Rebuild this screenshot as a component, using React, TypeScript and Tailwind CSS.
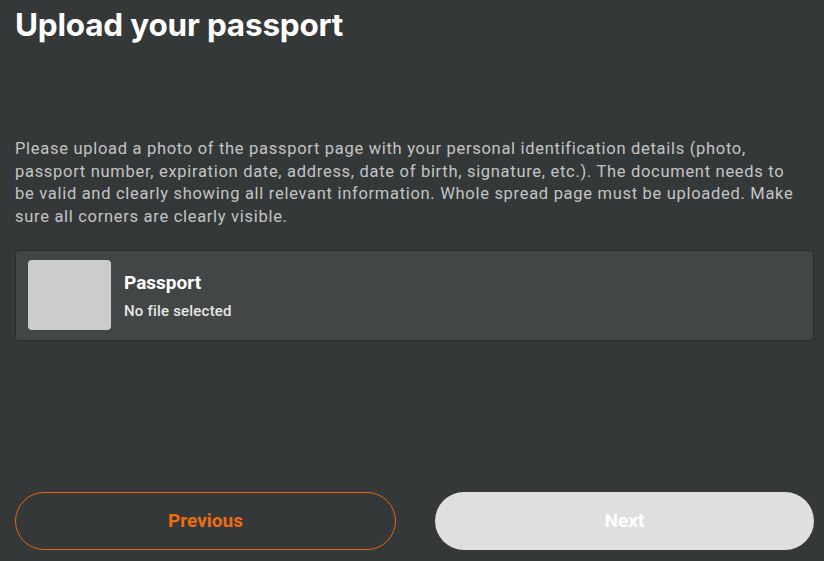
export default function App() {
  return (
    <div
      className="h-[561px] w-[824px] bg-[#353839] pl-[15px] pr-[10px] flex flex-col overflow-hidden"
      style={{ fontFamily: 'Roboto, "Liberation Sans", sans-serif' }}
    >
      <h1
        className="mt-[3px] text-[31.5px] leading-[44px] font-bold text-white tracking-[-0.2px]"
        style={{ fontFamily: 'Inter, Roboto, sans-serif' }}
      >
        Upload your passport
      </h1>
      <p className="mt-[91px] text-[16.5px] leading-[22.7px] tracking-[0.7px] text-[#c4c4c4] whitespace-nowrap">
        Please upload a photo of the passport page with your personal identification details (photo,
        <br />
        passport number, expiration date, address, date of birth, signature, etc.). The document needs to
        <br />
        be valid and clearly showing all relevant information. Whole spread page must be uploaded. Make
        <br />
        sure all corners are clearly visible.
      </p>
      <div className="mt-[21px] h-[91px] rounded-[4px] border border-[#2a2c2d] bg-[#434647] flex items-center pl-[12px] gap-[13px]">
        <div className="w-[83px] h-[70px] rounded-[4px] bg-[#cccccc]" />
        <div className="flex flex-col">
          <div className="text-[19px] leading-[24px] font-bold text-white">Passport</div>
          <div className="mt-[7px] text-[15px] leading-[18px] font-medium tracking-[0.2px] text-[#e6e6e6]">No file selected</div>
        </div>
      </div>
      <div className="mt-auto mb-[11px] flex gap-[39px]">
        <button className="flex-1 h-[58px] rounded-full border border-[#e8650a] text-[#ef6c0f] text-[19px] font-bold">
          Previous
        </button>
        <button className="flex-1 h-[58px] rounded-full bg-[#dfdfdf] text-white text-[19px] font-bold">
          Next
        </button>
      </div>
    </div>
  );
}
